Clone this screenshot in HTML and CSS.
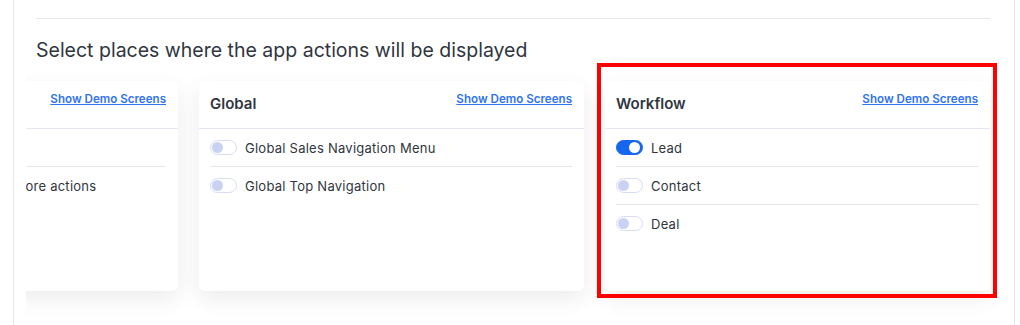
FILE: index.html
```html
<!DOCTYPE html>
<html lang="en">
<head>
    <meta charset="UTF-8">
    <meta name="viewport" content="width=device-width, initial-scale=1.0">
    <title>App actions</title>
    <link rel="stylesheet" href="styles.css">
</head>
<body>

<div class="panel">
    <div class="panel-inner">
        <div class="divider"></div>
        <h2 class="section-title">Select places where the app actions will be displayed</h2>

        <!-- 카드 스크롤 영역 -->
        <div class="card-scroller">
            <section class="card card-first">
                <div class="card-header">
                    <h3>Record Page</h3>
                    <a href="#" class="demo-link">Show Demo Screens</a>
                </div>
                <div class="card-body">
                    <div class="row">
                        <span class="toggle"></span>
                        <span class="label">Deal record page</span>
                    </div>
                    <div class="row">
                        <span class="toggle"></span>
                        <span class="label">Contact record page cards more actions</span>
                    </div>
                </div>
            </section>

            <section class="card">
                <div class="card-header">
                    <h3>Global</h3>
                    <a href="#" class="demo-link">Show Demo Screens</a>
                </div>
                <div class="card-body">
                    <div class="row">
                        <span class="toggle"></span>
                        <span class="label">Global Sales Navigation Menu</span>
                    </div>
                    <div class="row">
                        <span class="toggle"></span>
                        <span class="label">Global Top Navigation</span>
                    </div>
                </div>
            </section>

            <section class="card card-marked">
                <div class="mark"></div>
                <div class="card-header">
                    <h3>Workflow</h3>
                    <a href="#" class="demo-link">Show Demo Screens</a>
                </div>
                <div class="card-body">
                    <div class="row">
                        <span class="toggle on"></span>
                        <span class="label">Lead</span>
                    </div>
                    <div class="row">
                        <span class="toggle"></span>
                        <span class="label">Contact</span>
                    </div>
                    <div class="row">
                        <span class="toggle"></span>
                        <span class="label">Deal</span>
                    </div>
                </div>
            </section>
        </div>
    </div>
</div>

</body>
</html>
```

FILE: styles.css
```css
body {
    margin: 0;
    font-family: Inter, "Noto Sans", sans-serif;
    background-color: #fff;
    color: #2f3640;
}

.panel {
    margin: 0 5px 0 13px;
    min-height: 325px;
    border-left: 1px solid #e3e6f2;
    border-right: 1px solid #e3e6f2;
}

.panel-inner {
    padding: 18px 24px 0 22px;
}

.divider {
    border-top: 1px solid #e3e6f2;
}

.section-title {
    margin: 19px 0 0 0;
    font-size: 19.5px;
    line-height: 24px;
    font-weight: 400;
    color: #2f3640;
}

/* 카드 영역 */
.card-scroller {
    display: flex;
    gap: 21px;
    margin: 0 -10px;
    padding: 19px 0 34px 0;
    overflow: hidden;
}

.card {
    position: relative;
    flex: 0 0 385px;
    height: 210px;
    background-color: white;
    border-radius: 6px;
    box-shadow: 0 8px 22px rgba(0, 0, 0, 0.08);
}

.card-first {
    margin-left: -233px;
}

.card-header {
    display: flex;
    justify-content: space-between;
    align-items: flex-start;
    height: 47px;
    padding: 0 12px 0 11px;
    border-bottom: 1px solid #e3e7f5;
}

.card-header h3 {
    margin: 0;
    padding-top: 13px;
    font-size: 15px;
    line-height: 20px;
    font-weight: 600;
    color: #2f3640;
    white-space: nowrap;
}

.demo-link {
    padding-top: 10px;
    font-size: 11.6px;
    line-height: 16px;
    font-weight: 600;
    color: #2f73f0;
    text-decoration: underline;
    white-space: nowrap;
}

.card-body {
    padding: 0 12px 0 11px;
}

.row {
    display: flex;
    align-items: center;
    height: 37px;
    border-bottom: 1px solid #e3e7f5;
}

.row:last-child {
    border-bottom: none;
}

.label {
    margin-left: 8px;
    font-size: 13px;
    letter-spacing: 0.25px;
    color: #2f3640;
    white-space: nowrap;
}

/* 토글 스위치 */
.toggle {
    position: relative;
    flex: 0 0 auto;
    width: 25px;
    height: 13px;
    border: 1px solid #d6dcf3;
    border-radius: 8px;
    background-color: white;
}

.toggle::after {
    content: "";
    position: absolute;
    top: 1px;
    left: 1px;
    width: 11px;
    height: 11px;
    border-radius: 50%;
    background-color: #c9d2f3;
}

.toggle.on {
    background-color: #1767ee;
    border-color: #1767ee;
}

.toggle.on::after {
    left: auto;
    right: 2px;
    background-color: white;
}

/* 빨간 표시 박스 */
.mark {
    position: absolute;
    top: -18px;
    left: -8px;
    right: -7px;
    bottom: -7px;
    border: 4px solid #f00;
    pointer-events: none;
}
```
